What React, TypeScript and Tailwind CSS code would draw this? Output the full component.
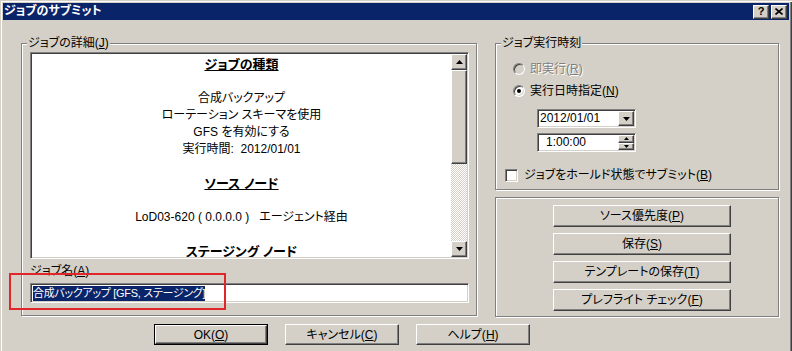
import React from "react";

const raised =
  "bg-[#d4d0c8] border border-t-white border-l-white border-r-[#404040] border-b-[#404040] shadow-[inset_-1px_-1px_0_#808080]";
const sunken =
  "border border-t-[#808080] border-l-[#808080] border-r-white border-b-white shadow-[inset_1px_1px_0_#404040,inset_-1px_-1px_0_#d4d0c8]";
const etched = "border border-[#808080] shadow-[inset_1px_1px_0_#fff,1px_1px_0_#fff]";

function Tri({ down = false, w = 7 }: { down?: boolean; w?: number }) {
  const h = Math.ceil(w / 2);
  return (
    <svg width={w} height={h} viewBox={`0 0 ${w} ${h}`}>
      {down ? (
        <polygon points={`0,0 ${w},0 ${w / 2},${h}`} fill="#000" />
      ) : (
        <polygon points={`0,${h} ${w},${h} ${w / 2},0`} fill="#000" />
      )}
    </svg>
  );
}

function GroupBox({
  label,
  className,
  children,
}: {
  label?: React.ReactNode;
  className: string;
  children?: React.ReactNode;
}) {
  return (
    <div className={`relative ${etched} ${className}`}>
      {label && (
        <span className="absolute -top-[9px] left-[5px] bg-[#d4d0c8] px-[1px] leading-[17px]">{label}</span>
      )}
      {children}
    </div>
  );
}

function Radio({ checked, disabled }: { checked?: boolean; disabled?: boolean }) {
  return (
    <span
      className={`w-[12px] h-[12px] rounded-full flex items-center justify-center border border-t-[#808080] border-l-[#808080] border-r-white border-b-white shadow-[inset_1px_1px_0_#404040,inset_-1px_-1px_0_#d4d0c8] ${
        disabled ? "bg-[#d4d0c8]" : "bg-white"
      }`}
    >
      {checked && <span className="w-[4px] h-[4px] rounded-full bg-black" />}
    </span>
  );
}

function Btn({ children, w, def }: { children: React.ReactNode; w: string; def?: boolean }) {
  const inner = (
    <div className={`${raised} h-full flex items-center justify-center`}>{children}</div>
  );
  return def ? (
    <div className={`${w} h-[21px] border border-black`}>{inner}</div>
  ) : (
    <div className={`${w} h-[21px]`}>{inner}</div>
  );
}

function Line({ children, bold }: { children?: React.ReactNode; bold?: boolean }) {
  return (
    <div className={`h-[17px] whitespace-pre ${bold ? "font-bold underline text-[13px]" : ""}`}>
      {children}
    </div>
  );
}

export default function App() {
  return (
    <div className="relative w-[792px] h-[351px] overflow-hidden bg-[#d4d0c8] flex flex-col text-[12px] text-black font-['Liberation_Sans','Noto_Sans_CJK_JP',sans-serif] [font-feature-settings:'palt'] shadow-[inset_1px_1px_0_#d4d0c8,inset_2px_2px_0_#fff,inset_-1px_0_0_#404040,inset_-2px_0_0_#808080]">
      {/* title bar */}
      <div className="mx-[3px] mt-[3px] h-[17px] bg-[#0a246a] flex items-center justify-between pl-[1px] pr-[2px]">
        <span className="text-white font-bold text-[12px] leading-[17px]">ジョブのサブミット</span>
        <div className="flex">
          <div className={`${raised} w-[16px] h-[14px] flex items-center justify-center font-bold text-[11px] leading-none`}>?</div>
          <div className={`${raised} w-[16px] h-[14px] ml-[2px] flex items-center justify-center`}>
            <svg width="8" height="7" viewBox="0 0 8 7">
              <path d="M0.5 0.5 L7.5 6.5 M7.5 0.5 L0.5 6.5" stroke="#000" strokeWidth="1.6" />
            </svg>
          </div>
        </div>
      </div>

      {/* main */}
      <div className="ml-[21px] mt-[23px] flex gap-[18px]">
        <GroupBox
          className="w-[456px] h-[273px] pl-[8px] pt-[8px]"
          label={
            <>
              ジョブの詳細(<u>J</u>)
            </>
          }
        >
          <div className={`${sunken} bg-white w-[439px] h-[207px] p-[1px] flex`}>
            <div className="flex-1 overflow-hidden pt-[2px] text-center leading-[17px]">
              <Line bold>ジョブの種類</Line>
              <Line />
              <Line>合成バックアップ</Line>
              <Line>ローテーション スキーマを使用</Line>
              <Line>GFS を有効にする</Line>
              <Line>実行時間:  2012/01/01</Line>
              <Line />
              <Line bold>ソース ノード</Line>
              <Line />
              <Line>LoD03-620 ( 0.0.0.0 )   エージェント経由</Line>
              <Line />
              <Line bold>ステージング ノード</Line>
            </div>
            <div className="w-[16px] flex flex-col">
              <div className={`${raised} h-[16px] flex items-center justify-center`}>
                <Tri />
              </div>
              <div className={`${raised} h-[94px]`} />
              <div className="flex-1 bg-[repeating-conic-gradient(#fff_0_25%,#d4d0c8_0_50%)] bg-[length:2px_2px]" />
              <div className={`${raised} h-[16px] flex items-center justify-center`}>
                <Tri down />
              </div>
            </div>
          </div>
          <div className="mt-[4px] h-[17px] leading-[17px]">
            ジョブ名(<u>A</u>)
          </div>
          <div className={`${sunken} bg-white w-[439px] h-[20px] mt-[3px] flex items-center pl-[2px]`}>
            <span className="bg-[#0a246a] text-white text-[11px] tracking-[-0.3px] leading-[15px] h-[15px] whitespace-pre">合成バックアップ [GFS, ステージング]</span>
          </div>
        </GroupBox>

        <div className="w-[284px] flex flex-col gap-[7px]">
          <GroupBox className="h-[147px] pt-[17px]" label="ジョブ実行時刻">
            <div className="flex items-center h-[16px] pl-[17px] gap-[5px] text-[#808080] [text-shadow:1px_1px_0_#fff]">
              <Radio disabled />
              <span>
                即実行(<u>R</u>)
              </span>
            </div>
            <div className="flex items-center h-[16px] mt-[6px] pl-[17px] gap-[5px]">
              <Radio checked />
              <span>
                実行日時指定(<u>N</u>)
              </span>
            </div>
            <div className={`${sunken} bg-white ml-[41px] mt-[10px] w-[99px] h-[19px] p-[1px] flex`}>
              <span className="flex-1 pl-[1px] leading-[15px]">2012/01/01</span>
              <div className={`${raised} w-[16px] flex items-center justify-center`}>
                <Tri down />
              </div>
            </div>
            <div className={`${sunken} bg-white ml-[41px] mt-[5px] w-[99px] h-[19px] p-[1px] flex`}>
              <span className="flex-1 pl-[7px] leading-[15px]">1:00:00</span>
              <div className="w-[16px] flex flex-col">
                <div className={`${raised} h-1/2 flex items-center justify-center`}>
                  <Tri w={5} />
                </div>
                <div className={`${raised} h-1/2 flex items-center justify-center`}>
                  <Tri down w={5} />
                </div>
              </div>
            </div>
            <div className="flex items-center h-[16px] mt-[15px] pl-[9px] gap-[6px]">
              <span className={`${sunken} bg-white w-[13px] h-[13px]`} />
              <span>
                ジョブをホールド状態でサブミット(<u>B</u>)
              </span>
            </div>
          </GroupBox>
          <GroupBox className="h-[120px] pl-[57px] pt-[7px] flex flex-col gap-[6px]">
            <Btn w="w-[178px] !h-[22px]">
              ソース優先度(<u>P</u>)
            </Btn>
            <Btn w="w-[178px] !h-[22px]">
              保存(<u>S</u>)
            </Btn>
            <Btn w="w-[178px] !h-[22px]">
              テンプレートの保存(<u>T</u>)
            </Btn>
            <Btn w="w-[178px] !h-[22px]">
              プレフライト チェック(<u>F</u>)
            </Btn>
          </GroupBox>
        </div>
      </div>

      {/* bottom buttons */}
      <div className="ml-[154px] mt-[7px] flex gap-[17px]">
        <Btn w="w-[114px]" def>
          OK(<u>O</u>)
        </Btn>
        <Btn w="w-[114px]">
          キャンセル(<u>C</u>)
        </Btn>
        <Btn w="w-[114px]">
          ヘルプ(<u>H</u>)
        </Btn>
      </div>

      {/* annotation */}
      <div className="absolute left-[9px] top-[273px] w-[217px] h-[37px] border-2 border-[#e0262b]" />
    </div>
  );
}
